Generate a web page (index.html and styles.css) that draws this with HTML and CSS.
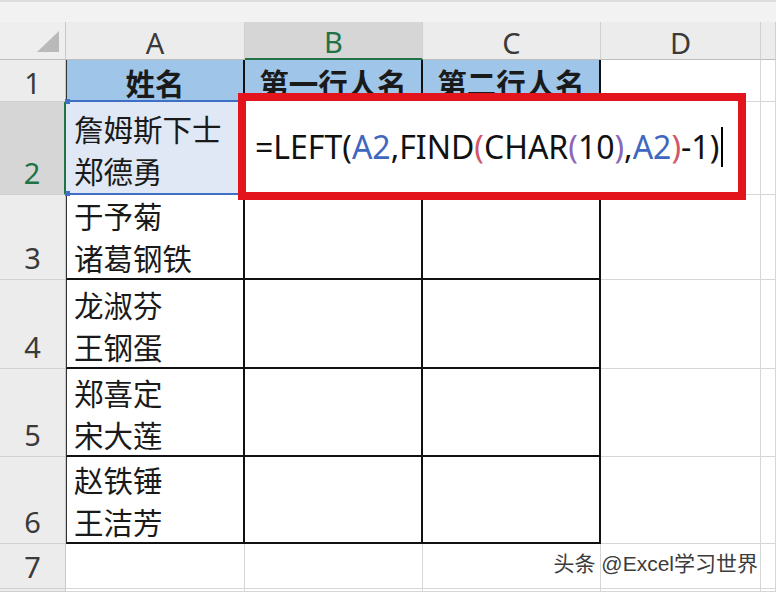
FILE: index.html
```html
<!DOCTYPE html>
<html lang="zh">
<head>
<meta charset="utf-8">
<link rel="stylesheet" href="styles.css">
</head>
<body>
<div class="top"></div>
<div class="sheet">
  <div class="corner"><svg class="tri" width="24" height="23" viewBox="0 0 24 23"><polygon points="1,22 23,22 23,1" fill="#b9b9b9"/></svg></div>
  <div class="ch">A</div>
  <div class="ch chsel">B</div>
  <div class="ch">C</div>
  <div class="ch">D</div>
  <div class="ch"></div>

  <div class="rh r1">1</div>
  <div class="c t a hd a1">姓名</div>
  <div class="c t hd">第一行人名</div>
  <div class="c t hd">第二行人名</div>
  <div class="c"></div>
  <div class="c"></div>

  <div class="rh rhsel">2</div>
  <div class="c t a ref"><span>詹姆斯下士</span><span>郑德勇</span></div>
  <div class="c t"></div>
  <div class="c t"></div>
  <div class="c"></div>
  <div class="c"></div>

  <div class="rh">3</div>
  <div class="c t a"><span>于予菊</span><span>诸葛钢铁</span></div>
  <div class="c t"></div>
  <div class="c t"></div>
  <div class="c"></div>
  <div class="c"></div>

  <div class="rh">4</div>
  <div class="c t a"><span>龙淑芬</span><span>王钢蛋</span></div>
  <div class="c t"></div>
  <div class="c t"></div>
  <div class="c"></div>
  <div class="c"></div>

  <div class="rh">5</div>
  <div class="c t a"><span>郑喜定</span><span>宋大莲</span></div>
  <div class="c t"></div>
  <div class="c t"></div>
  <div class="c"></div>
  <div class="c"></div>

  <div class="rh">6</div>
  <div class="c t a"><span>赵铁锤</span><span>王洁芳</span></div>
  <div class="c t"></div>
  <div class="c t"></div>
  <div class="c"></div>
  <div class="c"></div>

  <div class="rh">7</div>
  <div class="c a7"></div>
  <div class="c"></div>
  <div class="c"></div>
  <div class="c"></div>
  <div class="c"></div>

  <div class="rh"></div>
  <div class="c"></div>
  <div class="c"></div>
  <div class="c"></div>
  <div class="c"></div>
  <div class="c"></div>
</div>

<div class="edit"><span class="fx">=LEFT(<span class="blue">A2</span>,FIND<span class="pink">(</span>CHAR<span class="purple">(</span>10<span class="purple">)</span>,<span class="blue">A2</span><span class="pink">)</span>-1)</span><span class="caret"></span></div>

<div class="mark">头条 @Excel学习世界</div>
</body>
</html>
```

FILE: styles.css
```css
html, body {
  margin: 0;
  padding: 0;
}
body {
  width: 776px;
  height: 592px;
  overflow: hidden;
  position: relative;
  background: #ffffff;
  font-family: "Noto Sans CJK SC", "Noto Sans", sans-serif;
}
.top {
  height: 22px;
  box-sizing: border-box;
  background: #f2f2f2;
  border-top: 2px solid #dcdcdc;
}
.sheet {
  display: grid;
  grid-template-columns: 66px 179px 178px 178px 160px 1fr;
  grid-template-rows: 38px 42px 93px 85px 89px 88px 87px 45px 1fr;
  height: 570px;
}
.sheet > div {
  box-sizing: border-box;
  min-width: 0;
}
.corner {
  background: #eeeeee;
  border-right: 1px solid #c9c9c9;
  border-bottom: 1px solid #bdbdbd;
  display: flex;
  align-items: flex-end;
  justify-content: flex-end;
  padding: 0 5px 6px 0;
}
.tri {
  display: block;
}
.ch {
  background: #ececec;
  border-right: 1px solid #d0d0d0;
  border-bottom: 1px solid #bdbdbd;
  display: flex;
  align-items: center;
  justify-content: center;
  padding-top: 3px;
  font-family: "Noto Sans", sans-serif;
  font-size: 29px;
  color: #3a3a3a;
}
.ch.chsel {
  background: #d6d6d6;
  color: #217346;
  border-bottom: 2px solid #217346;
}
.rh {
  background: #ececec;
  border-right: 1px solid #c9c9c9;
  border-bottom: 1px solid #d0d0d0;
  display: flex;
  align-items: flex-end;
  justify-content: center;
  font-family: "Noto Sans", sans-serif;
  font-size: 29px;
  line-height: 42px;
  color: #3a3a3a;
}
.rh.r1 {
  line-height: 36px;
}
.rh.rhsel {
  background: #d6d6d6;
  color: #217346;
  border-right: 2px solid #217346;
}
.c {
  border-right: 1px solid #d6d6d6;
  border-bottom: 1px solid #d6d6d6;
  font-size: 29.5px;
  line-height: 42px;
  color: #1a1a1a;
  display: flex;
  flex-direction: column;
  justify-content: flex-end;
  white-space: nowrap;
}
.c.t {
  border-right: 2px solid #111111;
  border-bottom: 2px solid #111111;
}
.c.a {
  border-left: 1px solid #333333;
  padding-left: 7px;
}
.c.hd {
  background: #9fc5e8;
  font-weight: 700;
  align-items: center;
  padding-left: 0;
  line-height: 36px;
}
.c.a1 {
  border-bottom: 2px solid #3f6fc4;
}
.c.ref {
  position: relative;
  background: #dfe8f4;
  border-left: none;
  padding-left: 8px;
  padding-bottom: 2px;
  border-bottom: 2px solid #3f6fc4;
}
.c.ref::before,
.c.ref::after {
  content: "";
  position: absolute;
  left: -1px;
  width: 5px;
  height: 5px;
  background: #3f6fc4;
}
.c.ref::before {
  top: -3px;
}
.c.ref::after {
  bottom: -3px;
}
.edit {
  position: absolute;
  left: 238px;
  top: 93px;
  width: 508px;
  height: 107px;
  box-sizing: border-box;
  border: 8px solid #e3141c;
  background: #ffffff;
  display: flex;
  align-items: center;
  padding-left: 9px;
  font-family: "Noto Sans", sans-serif;
  font-size: 32px;
  color: #111111;
  white-space: nowrap;
}
.blue {
  color: #3f67c0;
}
.pink {
  color: #d0566a;
}
.purple {
  color: #8a68b4;
}
.caret {
  display: inline-block;
  width: 2px;
  height: 40px;
  background: #000000;
  margin-left: 2px;
}
.mark {
  position: absolute;
  right: 18px;
  top: 550px;
  font-family: "Liberation Sans", "Noto Sans CJK SC", sans-serif;
  font-size: 21px;
  line-height: 28px;
  color: #3c3c3c;
  text-shadow: 1px 1px 0 #ffffff, -1px -1px 0 #ffffff, 1px -1px 0 #ffffff, -1px 1px 0 #ffffff;
  white-space: nowrap;
}
```
